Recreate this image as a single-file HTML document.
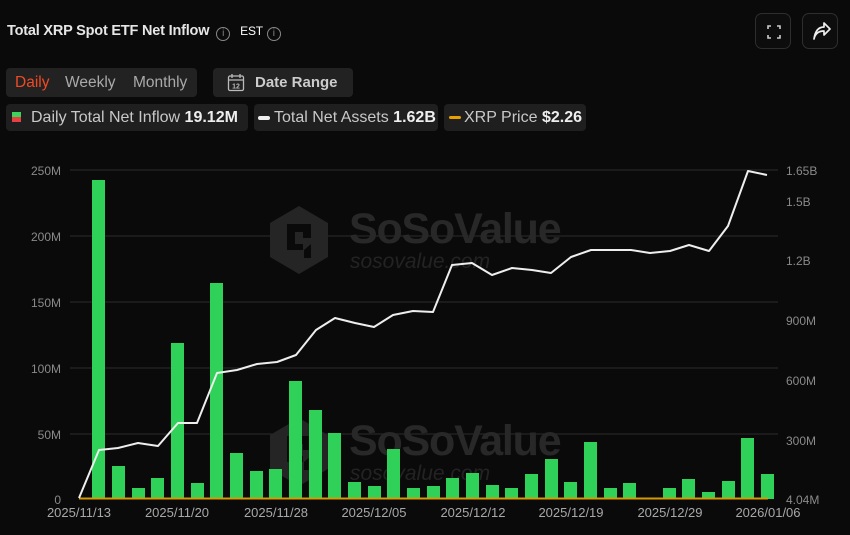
<!DOCTYPE html>
<html><head><meta charset="utf-8"><style>
*{margin:0;padding:0;box-sizing:border-box}
body{width:850px;height:535px;background:#0a0a0a;font-family:"Liberation Sans",sans-serif;position:relative;overflow:hidden;color:#ddd}
.abs{position:absolute}
.title{left:7px;top:23px;font-size:14.5px;font-weight:bold;color:#e6e6e6;letter-spacing:-0.2px}
.info{display:inline-block;width:14px;height:14px;border:1px solid #888;border-radius:50%;font-size:10px;color:#888;text-align:center;line-height:12px;font-weight:normal;vertical-align:-1px}
.box{background:#222;border-radius:4px}
.ib{width:36px;height:36px;border:1px solid #2e2e2e;border-radius:7px;background:#0d0d0d}
.pill{background:#1f1f1f;border-radius:4px;height:27px;top:104px;font-size:16px;color:#c8c8c8;line-height:27px;white-space:nowrap}
.pill b{color:#eee}
</style></head><body>
<div class="abs title">Total XRP Spot ETF Net Inflow <span class="info" style="margin-left:3px">i</span><span style="font-weight:normal;font-size:12px;color:#fff;margin-left:10px">EST</span> <span class="info">i</span></div>
<div class="abs ib" style="left:755px;top:13px"><svg width="36" height="36"><g stroke="#ccc" stroke-width="1.6" fill="none"><path d="M12 15v-3h3M21 12h3v3M24 21v3h-3M15 24h-3v-3"/></g></svg></div>
<div class="abs ib" style="left:802px;top:13px"><svg width="36" height="36"><path d="M11 25c1-5 4-8 10-8v4l6-6-6-6v4c-6 0-9 5-10 12z" fill="none" stroke="#eee" stroke-width="1.7" stroke-linejoin="round"/></svg></div>
<div class="abs box" style="left:6px;top:68px;width:191px;height:29px;font-size:15.5px;line-height:29px;color:#aaa"><span style="position:absolute;left:9px;color:#f04a25">Daily</span><span style="position:absolute;left:59px">Weekly</span><span style="position:absolute;left:127px">Monthly</span></div>
<div class="abs box" style="left:213px;top:68px;width:140px;height:29px;font-size:15px;line-height:29px;color:#ccc;font-weight:bold"><svg class="abs" style="left:14px;top:5px" width="18" height="19"><rect x="1.5" y="3" width="15" height="14.5" rx="1.5" fill="none" stroke="#bbb" stroke-width="1.3"/><path d="M1.5 7h15M5 1v4M13 1v4" stroke="#bbb" stroke-width="1.3"/><text x="9" y="15.5" font-size="7" fill="#bbb" text-anchor="middle" font-family="Liberation Sans">12</text></svg><span style="position:absolute;left:42px">Date Range</span></div>
<div class="abs pill" style="left:6px;width:242px"><span class="abs" style="left:6px;top:8px;width:9px;height:10px;background:linear-gradient(#3cd45c 50%,#e84040 50%)"></span><span style="position:absolute;left:25px">Daily Total Net Inflow <b>19.12M</b></span></div>
<div class="abs pill" style="left:254px;width:184px"><span class="abs" style="left:4px;top:12px;width:12px;height:4px;background:#eee;border-radius:2px"></span><span style="position:absolute;left:20px">Total Net Assets <b>1.62B</b></span></div>
<div class="abs pill" style="left:444px;width:142px"><span class="abs" style="left:5px;top:12px;width:12px;height:3px;background:#e6a000;border-radius:2px"></span><span style="position:absolute;left:20px">XRP Price <b>$2.26</b></span></div>
<svg class="abs" style="left:0;top:0" width="850" height="535">
<g stroke="#262626" stroke-width="1.2"><path d="M70 170H778M70 236H778M70 302H778M70 368H778M70 434H778"/></g>
<g fill="#282828" font-family="Liberation Sans">
<g><path d="M299 206l29 17v34l-29 17-29-17v-34z" fill="#252525"/><path d="M287 224h24v14h-8v-6h-8v12h8v6h-16z M311 244v14h-7v-8z" fill="#0a0a0a"/><text x="349" y="243" font-size="43" font-weight="bold" letter-spacing="-1.2">SoSoValue</text><text x="350" y="268" font-size="21" font-style="italic" fill="#232323">sosovalue.com</text></g>
<g transform="translate(0,212)"><path d="M299 206l29 17v34l-29 17-29-17v-34z" fill="#252525"/><path d="M287 224h24v14h-8v-6h-8v12h8v6h-16z M311 244v14h-7v-8z" fill="#0a0a0a"/><text x="349" y="243" font-size="43" font-weight="bold" letter-spacing="-1.2">SoSoValue</text><text x="350" y="268" font-size="21" font-style="italic" fill="#232323">sosovalue.com</text></g>
</g>
<g fill="#8a8a8a" font-size="12" font-family="Liberation Sans" text-anchor="end">
<text x="61" y="175">250M</text><text x="61" y="241">200M</text><text x="61" y="307">150M</text><text x="61" y="373">100M</text><text x="61" y="439">50M</text><text x="61" y="504">0</text></g>
<g fill="#8a8a8a" font-size="12" font-family="Liberation Sans">
<text x="786" y="175">1.65B</text><text x="786" y="206">1.5B</text><text x="786" y="265">1.2B</text><text x="786" y="325">900M</text><text x="786" y="385">600M</text><text x="786" y="445">300M</text><text x="786" y="504">4.04M</text></g>
<g fill="#a8a8a8" font-size="13" font-family="Liberation Sans" text-anchor="middle">
<text x="79" y="517">2025/11/13</text><text x="177" y="517">2025/11/20</text><text x="276" y="517">2025/11/28</text><text x="374" y="517">2025/12/05</text><text x="473" y="517">2025/12/12</text><text x="571" y="517">2025/12/19</text><text x="670" y="517">2025/12/29</text><text x="768" y="517">2026/01/06</text></g>
<g fill="#30d158">
<rect x="92" y="180" width="13" height="319"/><rect x="112" y="466" width="13" height="33"/><rect x="132" y="488" width="13" height="11"/><rect x="151" y="478" width="13" height="21"/><rect x="171" y="343" width="13" height="156"/><rect x="191" y="483" width="13" height="16"/><rect x="210" y="283" width="13" height="216"/><rect x="230" y="453" width="13" height="46"/><rect x="250" y="471" width="13" height="28"/><rect x="269" y="469" width="13" height="30"/><rect x="289" y="381" width="13" height="118"/><rect x="309" y="410" width="13" height="89"/><rect x="328" y="433" width="13" height="66"/><rect x="348" y="482" width="13" height="17"/><rect x="368" y="486" width="13" height="13"/><rect x="387" y="449" width="13" height="50"/><rect x="407" y="488" width="13" height="11"/><rect x="427" y="486" width="13" height="13"/><rect x="446" y="478" width="13" height="21"/><rect x="466" y="473" width="13" height="26"/><rect x="486" y="485" width="13" height="14"/><rect x="505" y="488" width="13" height="11"/><rect x="525" y="474" width="13" height="25"/><rect x="545" y="459" width="13" height="40"/><rect x="564" y="482" width="13" height="17"/><rect x="584" y="442" width="13" height="57"/><rect x="604" y="488" width="13" height="11"/><rect x="623" y="483" width="13" height="16"/><rect x="663" y="488" width="13" height="11"/><rect x="682" y="479" width="13" height="20"/><rect x="702" y="492" width="13" height="7"/><rect x="722" y="481" width="13" height="18"/><rect x="741" y="438" width="13" height="61"/><rect x="761" y="474" width="13" height="25"/>
</g>
<path d="M79 498.5H768" stroke="#d49a00" stroke-width="2"/>
<polyline fill="none" stroke="#eee" stroke-width="2" stroke-linejoin="round" points="79,498 99,450 118,448 138,443 158,446 178,423 197,423 217,373 237,370 257,364 277,362 296,355 316,330 335,318 355,323 374,327 393,315 413,311 433,312 452,265 472,263 492,275 512,268 532,270 551,273 571,257 591,250 611,250 631,250 650,253 670,251 689,245 709,251 728,226 748,171 767,175"/>
</svg>
</body></html>
